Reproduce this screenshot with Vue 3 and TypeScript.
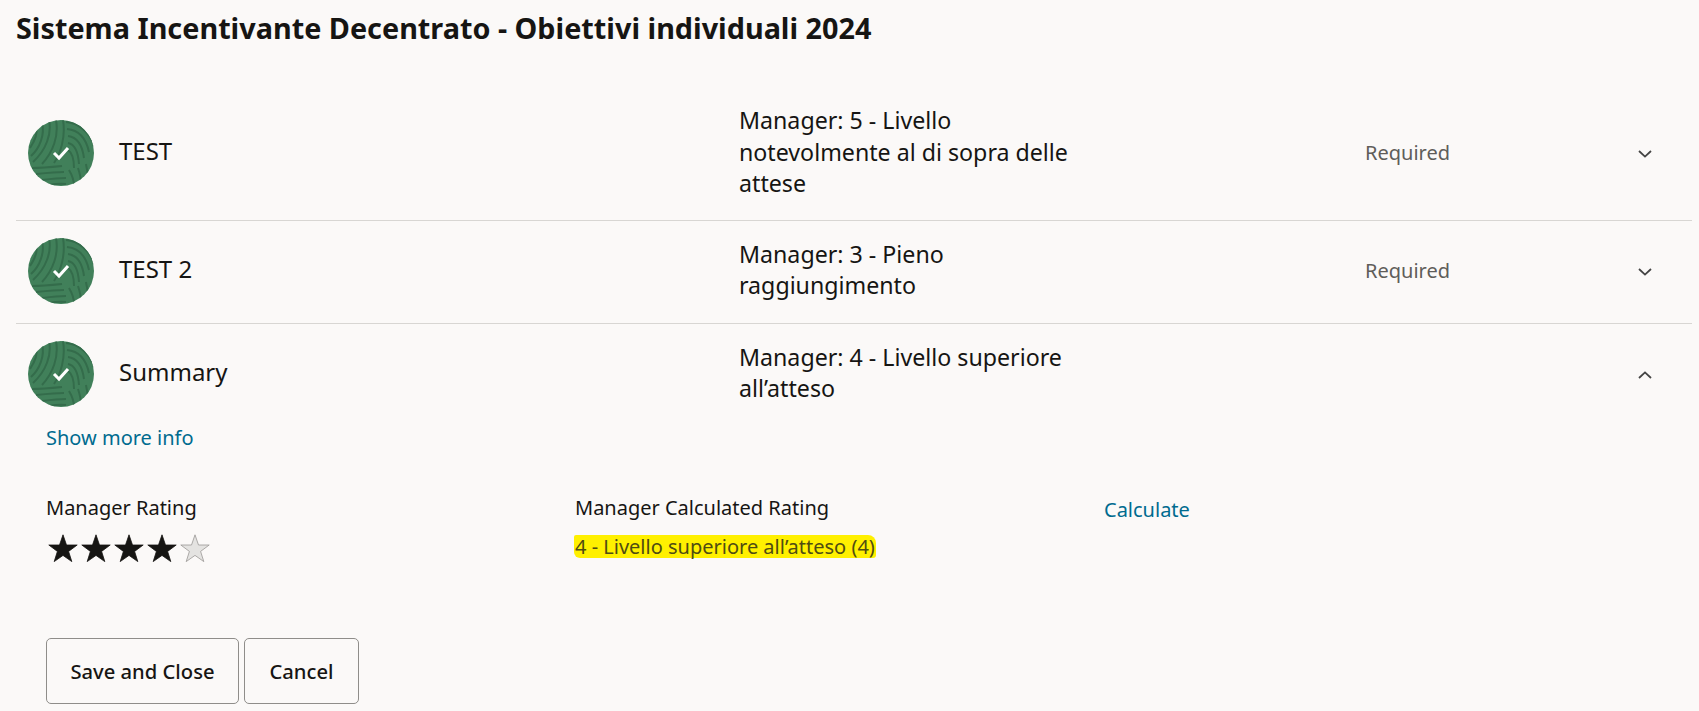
<script setup lang="ts">
interface Goal {
  name: string
  rating: string
  status?: string
  open?: boolean
}

const goals: Goal[] = [
  { name: 'TEST', rating: 'Manager: 5 - Livello notevolmente al di sopra delle attese', status: 'Required' },
  { name: 'TEST 2', rating: 'Manager: 3 - Pieno raggiungimento', status: 'Required' },
  { name: 'Summary', rating: 'Manager: 4 - Livello superiore all’atteso', open: true }
]

const stars = [true, true, true, true, false]

// woven pattern on the round badge
const swirls = [
  'M8 8C10 14 6 22 2 28',
  'M14 3C17 14 12 28 3 36',
  'M21 0C24 14 18 30 5 42',
  'M28 0C31 16 25 32 14 44',
  'M35 0C38 18 32 34 26 43',
  'M38 2C50 3 62 12 66 26',
  'M39 9C50 10 58 18 61 32',
  'M40 16C48 17 54 23 56 38',
  'M40 23C46 24 50 30 51 44',
  'M40 30C43 32 46 38 46 48',
  'M4 48C14 48 24 47 34 46',
  'M8 54C18 53 28 52 36 52',
  'M14 60C22 59 30 58 38 58',
  'M20 65C26 64 32 63 38 64',
  'M41 50C44 55 46 60 46 66',
  'M50 48C52 54 53 58 53 64',
  'M58 44C59 50 60 54 60 58'
]
</script>

<template>
  <main class="page">
    <h1 class="title">Sistema Incentivante Decentrato - Obiettivi individuali 2024</h1>

    <ul class="goals">
      <li v-for="goal in goals" :key="goal.name" class="goal" :class="{ open: goal.open }">
        <svg class="badge" viewBox="0 0 66 66" aria-hidden="true">
          <rect width="66" height="66" fill="#41805a" />
          <path v-for="d in swirls" :key="d" :d="d" fill="none" stroke="#346c4b" stroke-width="2" />
          <path d="M26 33l5 5 9-10" fill="none" stroke="#fff" stroke-width="3" />
        </svg>
        <span class="name">{{ goal.name }}</span>
        <span class="rating">{{ goal.rating }}</span>
        <span class="status">{{ goal.status }}</span>
        <svg class="chevron" viewBox="0 0 14 8" aria-hidden="true">
          <path :d="goal.open ? 'M1 7L7 1.4 13 7' : 'M1 1L7 6.6 13 1'" fill="none" stroke="#444" stroke-width="1.8" />
        </svg>
      </li>
    </ul>

    <section class="details">
      <a class="link more">Show more info</a>

      <div class="fields">
        <div class="field">
          <div class="label">Manager Rating</div>
          <div class="stars">
            <svg v-for="(on, i) in stars" :key="i" class="star" viewBox="0 0 30 28" aria-hidden="true">
              <path
                d="M15 .8l3.5 10.2h10.7l-8.6 6.4 3.2 10.2L15 21.4l-8.8 6.2 3.2-10.2L.8 11h10.7z"
                :fill="on ? '#161513' : '#e4e3e1'"
                :stroke="on ? '#161513' : '#9a9895'"
                stroke-width=".8"
              />
            </svg>
          </div>
        </div>
        <div class="field">
          <div class="label">Manager Calculated Rating</div>
          <div class="calc"><mark>4 - Livello superiore all’atteso (4)</mark></div>
        </div>
        <a class="link calculate">Calculate</a>
      </div>

      <div class="actions">
        <button class="btn save">Save and Close</button>
        <button class="btn cancel">Cancel</button>
      </div>
    </section>
  </main>
</template>

<style>
html,
body {
  background: #fbf9f8;
}
</style>

<style scoped>
.page {
  height: 711px;
  overflow: hidden;
  padding: 0 7px 0 16px;
  box-sizing: border-box;
  color: #161513;
  font-family: "Noto Sans", "Open Sans", sans-serif;
}

.title {
  margin: 0;
  padding-top: 8px;
  font-size: 28.8px;
  line-height: 40px;
  font-weight: 700;
}

.goals {
  list-style: none;
  margin: 40px 0 0;
  padding: 0;
}

.goal {
  display: grid;
  grid-template-columns: 66px 645px 626px 1fr 16px;
  align-items: center;
  padding: 17px 37px 19px 12px;
  border-bottom: 1px solid #d8d6d3;
}

.goal.open {
  border-bottom: 0;
  padding-bottom: 0;
}

.badge {
  display: block;
  width: 66px;
  height: 66px;
  border-radius: 50%;
}

.name {
  padding-left: 25px;
  font-size: 24px;
  margin-top: -5px;
}

.rating {
  width: 345px;
  margin-bottom: 1.2px;
  font-size: 23.2px;
  line-height: 31.6px;
}

.status {
  font-size: 20px;
  color: #5f5d5a;
}

.chevron {
  display: block;
  width: 14px;
  height: 8px;
  margin: 2px 0 0 -1px;
}

.details {
  padding-left: 30px;
}

.link {
  color: #006b8f;
  font-size: 20px;
  line-height: 28px;
}

.more {
  display: block;
  margin-top: 17px;
}

.fields {
  display: grid;
  grid-template-columns: 529px 529px auto;
  margin-top: 42px;
  height: 144px;
}

.label {
  font-size: 20px;
  line-height: 28px;
}

.stars {
  display: flex;
  gap: 3px;
  margin: 12px 0 0 2px;
}

.star {
  display: block;
  width: 30px;
  height: 28px;
}

.calc {
  margin-top: 11px;
  font-size: 20px;
  line-height: 28px;
}

mark {
  display: inline-block;
  background: #fff000;
  color: #4f4c12;
  border-radius: 2px 8px 3px 6px;
  line-height: 23px;
  padding: 0 1px;
  margin-left: -1px;
}

.calculate {
  line-height: 32px;
}

.actions {
  display: flex;
  gap: 5px;
}

.btn {
  height: 66px;
  background: transparent;
  border: 1px solid #8f8d8a;
  border-radius: 5px;
  color: #161513;
  font-family: inherit;
  font-size: 20.2px;
  font-weight: 500;
}

.save {
  width: 193px;
}

.cancel {
  width: 115px;
}
</style>
